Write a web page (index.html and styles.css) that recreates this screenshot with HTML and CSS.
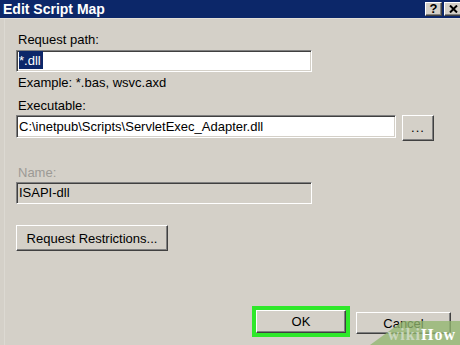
FILE: index.html
```html
<!DOCTYPE html>
<html>
<head>
<meta charset="utf-8">
<link rel="stylesheet" href="styles.css">
</head>
<body>
<div class="win">
  <div class="titlebar">
    <span class="title">Edit Script Map</span>
    <div class="tbtns">
      <span class="tbtn help">?</span>
      <span class="tbtn close"><svg width="9" height="8" viewBox="0 0 9 8"><path d="M1 0.5 L8 7.5 M8 0.5 L1 7.5" stroke="#000" stroke-width="2" fill="none"/></svg></span>
    </div>
  </div>
  <div class="content">
    <div class="label first">Request path:</div>
    <div class="field short"><span class="sel">*.dll</span></div>
    <div class="label hint">Example: *.bas, wsvc.axd</div>
    <div class="label exe">Executable:</div>
    <div class="row">
      <div class="field long">C:\inetpub\Scripts\ServletExec_Adapter.dll</div>
      <div class="btn dots">...</div>
    </div>
    <div class="label name">Name:</div>
    <div class="field short disabled">ISAPI-dll</div>
    <div class="btn restr">Request Restrictions...</div>
  </div>
  <div class="footer">
    <div class="focus"><div class="btn ok">OK</div></div>
    <div class="btn cancel">Cancel</div>
  </div>
  <div class="wm"><span class="wiki">wiki</span><span class="how">How</span></div>
</div>
</body>
</html>
```

FILE: styles.css
```css
html, body {
  margin: 0;
  padding: 0;
}
body {
  width: 460px;
  height: 345px;
  overflow: hidden;
  background: #d4d0c8;
  font-family: "Liberation Sans", Arial, sans-serif;
  font-size: 13px;
  color: #000;
}
.win {
  position: relative;
  width: 460px;
  height: 345px;
  display: flex;
  flex-direction: column;
  background: #d4d0c8;
  box-shadow: inset 4px 0 0 #d4d0c8, inset 5px 0 0 #dcd9d2;
  overflow: hidden;
}
.titlebar {
  height: 18px;
  background: #0c2769;
  display: flex;
  align-items: center;
  justify-content: space-between;
  border-bottom: 1px solid #e2dfd8;
  flex-shrink: 0;
}
.title {
  color: #fff;
  font-weight: bold;
  font-size: 14px;
  padding-left: 3px;
  line-height: 18px;
}
.tbtns {
  display: flex;
  gap: 2px;
  margin-right: -2px;
  align-self: flex-start;
  margin-top: 2px;
}
.tbtn {
  width: 17px;
  height: 14px;
  box-sizing: border-box;
  background: #d4d0c8;
  border-top: 1px solid #fff;
  border-left: 1px solid #fff;
  border-right: 1px solid #404040;
  border-bottom: 1px solid #404040;
  box-shadow: inset -1px -1px 0 #808080;
  display: flex;
  align-items: center;
  justify-content: center;
  font-weight: bold;
  font-size: 13px;
  line-height: 12px;
}
.close { width: 18px; }
.content {
  display: flex;
  flex-direction: column;
  align-items: flex-start;
  padding-left: 16px;
}
.label {
  line-height: 15px;
  padding-left: 2px;
}
.first { margin-top: 13px; }
.field {
  box-sizing: border-box;
  height: 22px;
  background: #fff;
  border-top: 1px solid #808080;
  border-left: 1px solid #808080;
  border-bottom: 1px solid #fff;
  border-right: 1px solid #fff;
  box-shadow: inset 1px 1px 0 #404040, inset -1px -1px 0 #d4d0c8;
  padding-left: 2px;
  line-height: 20px;
  white-space: nowrap;
}
.short { width: 296px; margin-top: 3px; }
.sel {
  background: #0c2769;
  color: #fff;
  padding: 2px 2px 1px 0;
}
.hint { margin-top: 3px; }
.exe { margin-top: 8px; }
.row {
  display: flex;
  align-items: flex-start;
  gap: 6px;
  margin-top: 2px;
}
.long { width: 380px; height: 23px; line-height: 21px; }
.btn {
  box-sizing: border-box;
  background: #d4d0c8;
  border-top: 1px solid #fff;
  border-left: 1px solid #fff;
  border-right: 1px solid #404040;
  border-bottom: 1px solid #404040;
  box-shadow: inset -1px -1px 0 #808080;
  display: flex;
  align-items: center;
  justify-content: center;
  white-space: nowrap;
}
.dots {
  width: 32px;
  height: 26px;
  padding-bottom: 2px;
  letter-spacing: 1px;
}
.name {
  margin-top: 24px;
  color: #9c9a95;
}
.disabled {
  margin-top: 2px;
  background: #d4d0c8;
}
.restr {
  margin-top: 21px;
  width: 152px;
  height: 26px;
}
.footer {
  margin-top: auto;
  display: flex;
  justify-content: flex-end;
  align-items: center;
  gap: 6px;
  padding: 0 9px 8px 0;
}
.focus {
  border: 4px solid #2ee82a;
  padding: 0;
  display: flex;
}
.ok {
  width: 90px;
  height: 23px;
}
.cancel {
  width: 95px;
  height: 22px;
  margin-top: 3px;
}
.wm {
  position: absolute;
  right: 0;
  bottom: 0;
  width: 90px;
  height: 24px;
  background: rgba(146, 182, 112, 0.78);
  clip-path: polygon(33px 0, 100% 0, 100% 100%, 0 100%);
  display: flex;
  align-items: center;
  justify-content: flex-end;
  padding-right: 4px;
  font-family: "Liberation Serif", "DejaVu Serif", serif;
  font-weight: bold;
  font-size: 16px;
  letter-spacing: 1px;
  line-height: 16px;
  padding-top: 4px;
  box-sizing: border-box;
}
.wiki { color: #c9d6bd; }
.how { color: #fff; }
```
